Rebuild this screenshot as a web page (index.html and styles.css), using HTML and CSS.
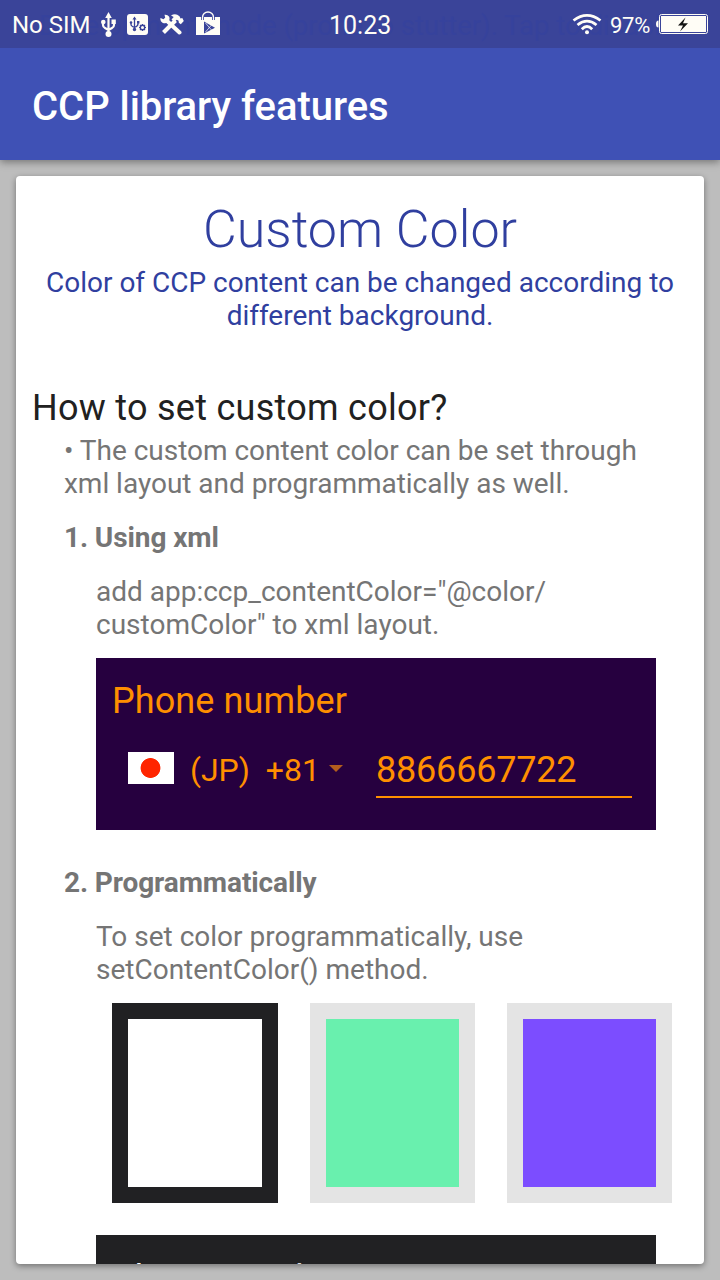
FILE: index.html
```html
<!DOCTYPE html>
<html lang="en">
<head>
<meta charset="utf-8">
<title>CCP library features</title>
<link rel="stylesheet" href="styles.css">
</head>
<body>
<div class="screen">
  <header class="status">
    <div class="ticker">Development mode (prone to stutter). Tap to disable.</div>
    <span class="carrier">No SIM</span>
    <svg class="ic usb" viewBox="0 0 16 26" width="16" height="26"><path d="M7.500 3v19M2 9.500v3.500q0 2 2 3l3.500 2 3.500-2q2-1 2-3V9" fill="none" stroke="#fffdf6" stroke-width="2.200"/><path d="M7.500 0l3.300 6H4.200zM10.500 7.500h4.300v4.500h-4.300z" fill="#fffdf6"/><circle cx="2.300" cy="10" r="2.300" fill="#fffdf6"/><circle cx="7.500" cy="22" r="3" fill="#fffdf6"/></svg>
    <svg class="ic debug" viewBox="0 0 21 21" width="21" height="21"><rect width="21" height="21" rx="3" fill="#fffdf6"/><path d="M7.500 4v11M4 8.500v2q0 1.500 3.500 3M11 8v2q0 2-3.500 3.500" fill="none" stroke="#3a4499" stroke-width="1.300"/><path d="M7.500 2.500l2 3h-4zM10 7h2.400v2.400H10z" fill="#3a4499"/><circle cx="4" cy="8.500" r="1.300" fill="#3a4499"/><circle cx="7.500" cy="15.500" r="1.700" fill="#3a4499"/><circle cx="15.500" cy="13.500" r="2.200" fill="none" stroke="#3a4499" stroke-width="1.400"/><path d="M15.500 10v1.300M15.500 15.700V17M12 13.500h1.300M17.700 13.500H19M13 11l1 1M18 11l-1 1M13 16l1-1M18 16l-1-1" stroke="#3a4499" stroke-width="1.200"/></svg>
    <svg class="ic tools" viewBox="0 0 24 21" width="24" height="21"><path d="M6 6l13.500 12.500" stroke="#fffdf6" stroke-width="4" stroke-linecap="round"/><path d="M3.500 18.500L15.500 6.500" stroke="#fffdf6" stroke-width="4"/><path d="M4.500.8l.7 2.900-1.700 1.500L.5 4Q-.2 7 2.500 8.700q3 1.300 5.500-.7Q10.500 5.500 9 2.500 7.500.4 4.500.8zM11 1.500q4.500-3 8.500.7l1 2.300 1.800-.5 1.500 3-3 3.200-2-1.400-.2-2-1.800-1-2.600 2.200L11.500 5.500l2.200-2.400z" fill="#fffdf6"/></svg>
    <svg class="ic bag" viewBox="0 0 24 24" width="24" height="24"><path d="M0 6h24v18H0z" fill="#fffdf6"/><path d="M6.500 9V6.500a5.500 5.500 0 0 1 11 0V9" fill="none" stroke="#3a4499" stroke-width="3"/><path d="M6.500 9V6.500a5.500 5.500 0 0 1 11 0V9" fill="none" stroke="#fffdf6" stroke-width="1.400"/><path d="M8 10.500l11 6.300L8 22.500z" fill="#3a4499"/><path d="M9.500 12l6 7M9.500 21l6-7" stroke="#fffdf6" stroke-width=".7"/></svg>
    <span class="clock">10:23</span>
    <svg class="ic wifi" viewBox="0 0 30 22" width="30" height="22"><path d="M1.500 7.500Q15-2.800 28.500 7.500M5.500 12Q15 4.300 24.500 12M9.800 16.200Q15 11 20.200 16.200" fill="none" stroke="#fffdf6" stroke-width="2.800"/><circle cx="15" cy="19.300" r="2" fill="#fffdf6"/></svg>
    <span class="percent">97%</span>
    <svg class="ic battery" viewBox="0 0 52 20" width="52" height="20"><path d="M2.500 6.500v7Q0 13.500 0 10t2.500-3.500z" fill="#fffdf6"/><rect x="3.500" y=".5" width="48" height="19" rx="2" fill="none" stroke="#fffdf6"/><rect x="5" y="2" width="45" height="16" fill="#fffdf6"/><path d="M29.500 3.500l-7.500 8h5l-3 6 8-8.300h-5z" fill="#141414"/></svg>
  </header>
  <div class="appbar">CCP library features</div>
  <main class="content">
    <section class="card">
      <h1 class="title"><span>Custom Color</span></h1>
      <p class="subtitle">Color of CCP content can be changed according to<br>different background.</p>
      <h2 class="question">How to set custom color?</h2>
      <p class="text intro">• The custom content color can be set through<br>xml layout and programmatically as well.</p>
      <h3 class="step">1. Using xml</h3>
      <p class="text detail">add app:ccp_contentColor="@color/<br>customColor" to xml layout.</p>
      <div class="phone purple">
        <div class="label">Phone number</div>
        <div class="row">
          <span class="flag"></span>
          <span class="country">(JP)&nbsp; +81</span>
          <span class="arrow"></span>
          <span class="number">8866667722</span>
        </div>
      </div>
      <h3 class="step second">2. Programmatically</h3>
      <p class="text detail">To set color programmatically, use<br>setContentColor() method.</p>
      <div class="swatches">
        <div class="swatch white"></div>
        <div class="swatch green"></div>
        <div class="swatch violet"></div>
      </div>
      <div class="phone dark"><div class="label">Phone number</div></div>
    </section>
  </main>
</div>
</body>
</html>
```
FILE: styles.css
```css
* { box-sizing: border-box; }
body { margin: 0; font-family: Roboto, sans-serif; }
h1, h2, h3, p { margin: 0; font-weight: 400; }
.screen { width: 720px; height: 1280px; background: #bdbdbd; overflow: hidden; display: flex; flex-direction: column; }
.status { position: relative; z-index: 3; flex: none; height: 48px; background: #3a4499; color: #fffdf6; display: flex; align-items: flex-start; white-space: nowrap; overflow: hidden; }
.ticker { position: absolute; left: 39px; top: 10px; font-size: 27.5px; line-height: 32px; color: #36429c; }
.status > span, .ic { position: relative; flex: none; }
.carrier { width: 89px; margin-left: 12px; padding-top: 10px; font-size: 24px; line-height: 30px; }
.usb { margin-top: 12px; }
.debug { margin: 14px 0 0 10px; }
.tools { margin: 14px 0 0 12px; }
.bag { margin: 11px 0 0 12px; }
.clock { width: 242px; padding-top: 11px; margin-left: 109px; font-size: 25px; line-height: 30px; }
.wifi { margin: 13px 0 0 1px; }
.percent { width: 46px; margin-left: 8px; padding-top: 11px; font-size: 22px; line-height: 30px; letter-spacing: -.3px; }
.battery { margin-top: 14px; }
.appbar { position: relative; z-index: 2; flex: none; height: 112px; padding: 35px 32px; background: #3f51b5; color: #fff; font-size: 40px; line-height: 48px; font-weight: 500; letter-spacing: -.05px; box-shadow: 0 2px 8px rgba(0,0,0,.4); }
.content { padding: 16px; }
.card { height: 1088px; padding: 0 16px; background: #fff; border-radius: 4px; overflow: hidden; box-shadow: 0 2px 6px rgba(0,0,0,.4); }
.title { padding-top: 23px; font-size: 52px; line-height: 62px; font-weight: 300; color: #303f9f; text-align: center; }
.subtitle { margin-top: 5px; font-size: 28px; line-height: 33px; color: #303f9f; text-align: center; white-space: nowrap; }
.question { margin-top: 54px; font-size: 36px; line-height: 44px; letter-spacing: .27px; color: #212121; }
.text { font-size: 28px; line-height: 33px; color: #757575; white-space: nowrap; }
.intro { margin: 4px 0 0 32px; letter-spacing: -.02px; }
.step { margin: 21px 0 0 32px; font-size: 28px; line-height: 33px; font-weight: 700; letter-spacing: -.1px; color: #757575; }
.detail { margin: 21px 0 0 64px; }
.phone { width: 560px; margin-left: 64px; padding: 21px 24px 0 16px; }
.label { font-size: 36px; line-height: 44px; letter-spacing: .1px; }
.purple { height: 172px; margin-top: 17px; background: #26003f; color: #ff8f00; }
.row { display: flex; align-items: flex-start; padding: 21px 0 0 16px; }
.flag { width: 46px; height: 32px; margin-top: 8px; background: radial-gradient(circle at 22.500px 16px, #ff2500 9.500px, #fff 10.300px); }
.country { width: 139px; margin-left: 16px; padding-top: 7px; font-size: 32px; line-height: 38px; white-space: nowrap; }
.arrow { margin-top: 21px; border: 7px solid transparent; border-top-color: #b25d1d; border-bottom: 0; }
.number { width: 256px; height: 54px; margin-left: 33px; padding-top: 4px; border-bottom: 2px solid #ff8f00; font-size: 36px; line-height: 44px; letter-spacing: -.2px; }
.second { margin-top: 36px; }
.swatches { display: grid; grid-template-columns: 166px 165px 165px; gap: 32px; margin: 17px 0 0 80px; }
.swatch { height: 200px; border: 16px solid #e4e4e4; }
.white { background: #fff; border-color: #212123; }
.green { background: #69f0ae; }
.violet { background: #7c4dff; }
.dark { height: 172px; margin-top: 32px; padding-top: 22px; background: #212123; color: #fff; }
```
